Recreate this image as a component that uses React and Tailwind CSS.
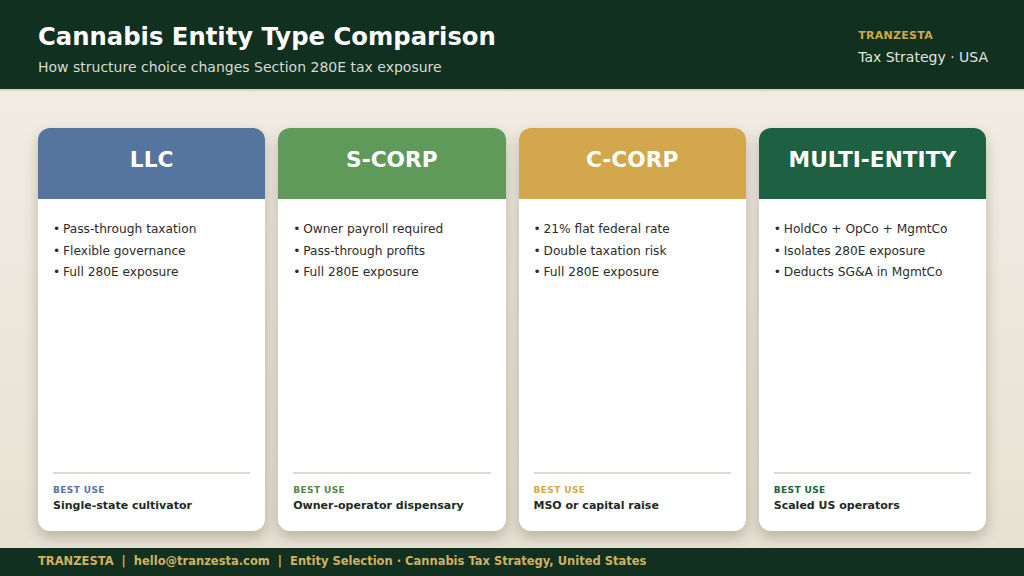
import React from "react";

const entities = [
  {
    name: "LLC",
    head: "bg-[#56759e]",
    label: "text-[#56759e]",
    points: ["Pass-through taxation", "Flexible governance", "Full 280E exposure"],
    best: "Single-state cultivator",
  },
  {
    name: "S-CORP",
    head: "bg-[#5f9a5b]",
    label: "text-[#4f8a4c]",
    points: ["Owner payroll required", "Pass-through profits", "Full 280E exposure"],
    best: "Owner-operator dispensary",
  },
  {
    name: "C-CORP",
    head: "bg-[#d3a84c]",
    label: "text-[#d3a84c]",
    points: ["21% flat federal rate", "Double taxation risk", "Full 280E exposure"],
    best: "MSO or capital raise",
  },
  {
    name: "MULTI-ENTITY",
    head: "bg-[#1d6142]",
    label: "text-[#1d6142]",
    points: ["HoldCo + OpCo + MgmtCo", "Isolates 280E exposure", "Deducts SG&A in MgmtCo"],
    best: "Scaled US operators",
  },
];

const EntityCard = ({ item }) => (
  <div className="flex flex-col bg-white rounded-xl overflow-hidden shadow-[0_6px_14px_rgba(60,50,30,0.28)]">
    <div className={`${item.head} h-[71px] flex items-center justify-center pb-[6px]`}>
      <h2 className="text-white text-[21.7px] font-bold">{item.name}</h2>
    </div>
    <div className="flex-1 flex flex-col px-[15px] pt-[20px] pb-[17px]">
      <ul className="flex-1 text-[12.2px] leading-[21.5px] text-[#2b2b2b]">
        {item.points.map((p) => (
          <li key={p} className="flex">
            <span className="w-[10px] shrink-0">•</span>
            <span>{p}</span>
          </li>
        ))}
      </ul>
      <div className="h-[2px] bg-[#dedbd0]" />
      <div className={`${item.label} mt-[9px] text-[9px] font-bold tracking-[0.4px] leading-[14px]`}>BEST USE</div>
      <div className="text-[11px] font-bold text-[#1e2a24] leading-[16px] mt-[1px]">{item.best}</div>
    </div>
  </div>
);

export default function App() {
  return (
    <div className="w-[1024px] h-[576px] flex flex-col font-['DejaVu_Sans',sans-serif] bg-gradient-to-b from-[#f3efe6] to-[#e7e1d3]">
      <header className="h-[91px] shrink-0 bg-[#11301f] border-b-2 border-[#cfd9c8] flex justify-between pl-[38px] pr-[36px]">
        <div className="pt-[21px]">
          <h1 className="text-white text-[24.3px] font-bold leading-[32px]">Cannabis Entity Type Comparison</h1>
          <p className="text-[#d6dbd3] text-[14px] leading-[20px] mt-[4px]">How structure choice changes Section 280E tax exposure</p>
        </div>
        <div className="pt-[28px] whitespace-nowrap">
          <div className="text-[#d3a84c] text-[11px] font-bold leading-[16px] tracking-[0.3px]">TRANZESTA</div>
          <div className="text-[#e2e5df] text-[14px] leading-[20px] mt-[3px]">Tax Strategy · USA</div>
        </div>
      </header>
      <main className="flex-1 grid grid-cols-4 gap-[13px] px-[38px] pt-[37px] pb-[17px]">
        {entities.map((e) => (
          <EntityCard key={e.name} item={e} />
        ))}
      </main>
      <footer className="h-[28px] shrink-0 bg-[#11301f] flex items-center px-[38px]">
        <p className="text-[#d3b060] text-[11.5px] font-bold whitespace-pre">
          TRANZESTA  |  hello@tranzesta.com  |  Entity Selection · Cannabis Tax Strategy, United States
        </p>
      </footer>
    </div>
  );
}
